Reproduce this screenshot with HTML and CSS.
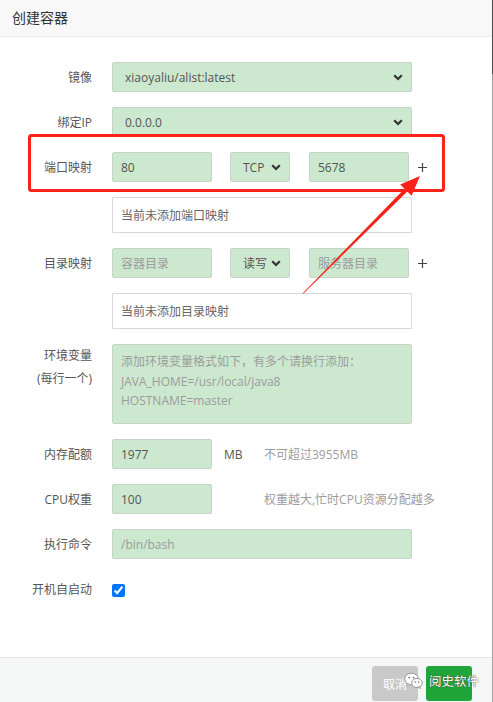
FILE: index.html
```
<!DOCTYPE html>
<html lang="zh-CN">
<head>
<meta charset="utf-8">
<title>创建容器</title>
<link rel="stylesheet" href="styles.css">
</head>
<body>
<div class="dialog">
  <div class="header">创建容器</div>
  <div class="form">
    <div class="row">
      <div class="lbl">镜像</div>
      <div class="field select full"><span>xiaoyaliu/alist:latest</span><svg class="chev" width="10" height="7" viewBox="0 0 10 7"><polyline points="1.2,1.2 5,5 8.8,1.2" fill="none" stroke="#333" stroke-width="2.2"/></svg></div>
    </div>
    <div class="row">
      <div class="lbl">绑定IP</div>
      <div class="field select full"><span>0.0.0.0</span><svg class="chev" width="10" height="7" viewBox="0 0 10 7"><polyline points="1.2,1.2 5,5 8.8,1.2" fill="none" stroke="#333" stroke-width="2.2"/></svg></div>
    </div>
    <div class="row">
      <div class="lbl">端口映射</div>
      <div class="field input short">80</div>
      <div class="field select mini"><span>TCP</span><svg class="chev" width="10" height="7" viewBox="0 0 10 7"><polyline points="1.2,1.2 5,5 8.8,1.2" fill="none" stroke="#333" stroke-width="2.2"/></svg></div>
      <div class="field input short">5678</div>
      <svg class="plus" width="11" height="11" viewBox="0 0 11 11"><path d="M5.5 1 V10 M1 5.5 H10" stroke="#444" stroke-width="1.2" fill="none"/></svg>
    </div>
    <div class="row">
      <div class="lbl"></div>
      <div class="note">当前未添加端口映射</div>
    </div>
    <div class="row">
      <div class="lbl">目录映射</div>
      <div class="field input short ph">容器目录</div>
      <div class="field select mini"><span>读写</span><svg class="chev" width="10" height="7" viewBox="0 0 10 7"><polyline points="1.2,1.2 5,5 8.8,1.2" fill="none" stroke="#333" stroke-width="2.2"/></svg></div>
      <div class="field input short ph">服务器目录</div>
      <svg class="plus" width="11" height="11" viewBox="0 0 11 11"><path d="M5.5 1 V10 M1 5.5 H10" stroke="#444" stroke-width="1.2" fill="none"/></svg>
    </div>
    <div class="row">
      <div class="lbl"></div>
      <div class="note">当前未添加目录映射</div>
    </div>
    <div class="row top">
      <div class="lbl multi">环境变量<br>(每行一个)</div>
      <div class="field area ph">添加环境变量格式如下，有多个请换行添加：<br>JAVA_HOME=/usr/local/java8<br>HOSTNAME=master</div>
    </div>
    <div class="row">
      <div class="lbl">内存配额</div>
      <div class="field input short">1977</div>
      <div class="unit">MB</div>
      <div class="hint">不可超过3955MB</div>
    </div>
    <div class="row">
      <div class="lbl">CPU权重</div>
      <div class="field input short">100</div>
      <div class="unit"></div>
      <div class="hint">权重越大,忙时CPU资源分配越多</div>
    </div>
    <div class="row">
      <div class="lbl">执行命令</div>
      <div class="field input full ph">/bin/bash</div>
    </div>
    <div class="row tall">
      <div class="lbl">开机自启动</div>
      <input class="check" type="checkbox" checked>
    </div>
  </div>
  <div class="footer">
    <button class="btn cancel">取消</button>
    <button class="btn ok"></button>
  </div>
  <div class="watermark">
    <svg class="wx" width="19" height="17" viewBox="0 0 19 17">
      <ellipse cx="7.5" cy="7" rx="6.8" ry="5.8" fill="#fff" stroke="#9a9a9a" stroke-width="1"/>
      <path d="M3.5 11.5 L2.6 14.2 L6 12.5 Z" fill="#fff" stroke="#9a9a9a" stroke-width="0.8"/>
      <circle cx="5.2" cy="5.6" r="0.9" fill="#777"/>
      <circle cx="9.6" cy="5.6" r="0.9" fill="#777"/>
      <ellipse cx="13" cy="11" rx="5.3" ry="4.6" fill="#fff" stroke="#9a9a9a" stroke-width="1"/>
      <path d="M15.8 14.5 L16.8 16.5 L13.8 15.3 Z" fill="#fff" stroke="#9a9a9a" stroke-width="0.8"/>
      <circle cx="11.3" cy="10" r="0.8" fill="#777"/>
      <circle cx="14.7" cy="10" r="0.8" fill="#777"/>
    </svg>
    <span>阅史软件</span>
  </div>
  <svg class="annot" width="493" height="702" viewBox="0 0 493 702">
    <rect x="29.5" y="135.5" width="414" height="55" rx="2" fill="none" stroke="#fa2219" stroke-width="3"/>
    <polygon points="302.5,293.5 303.5,293.5 407.3,191.5 411.6,195.8 420,176 400.2,184.4 404.5,188.7" fill="#fa2219"/>
  </svg>
</div>
</body>
</html>
```
FILE: styles.css
```
html, body {
  margin: 0;
  padding: 0;
  background: #fff;
}
body {
  font-family: "Open Sans", "Noto Sans CJK SC", sans-serif;
  font-size: 12px;
  color: #555;
}
.dialog {
  position: relative;
  width: 493px;
  height: 702px;
  box-sizing: border-box;
  display: flex;
  flex-direction: column;
  overflow: hidden;
  border-right: 1px solid #999;
  border-image: linear-gradient(to bottom, #4a4a4a 0, #4a4a4a 75px, #a3a3a3 75px, #a3a3a3 100%) 1;
  border-top: 0;
  border-left: 0;
  border-bottom: 0;
}
.header {
  height: 36px;
  line-height: 35px;
  padding-left: 12px;
  font-size: 14px;
  color: #333;
  background: #f8f8f8;
  border-bottom: 1px solid #eaeaea;
}
.form {
  flex: 1;
  padding-top: 25px;
}
.row {
  display: flex;
  align-items: center;
  margin-bottom: 15px;
}
.row.top {
  align-items: flex-start;
}
.row.tall {
  min-height: 30px;
}
.lbl {
  width: 112px;
  flex: none;
  padding-right: 20px;
  box-sizing: border-box;
  text-align: right;
  color: #555;
}
.lbl.multi {
  line-height: 23px;
  padding-top: 0;
}
.field {
  box-sizing: border-box;
  height: 30px;
  background: #cce8cf;
  border: 1px solid #c6d3c8;
  border-radius: 2px;
  color: #555;
  display: flex;
  align-items: center;
  white-space: nowrap;
}
.input {
  padding-left: 8px;
}
.select {
  padding-left: 12px;
  padding-right: 8px;
  justify-content: space-between;
}
.full {
  width: 300px;
}
.short {
  width: 100px;
}
.mini {
  width: 60px;
  margin-left: 18px;
  margin-right: 19px;
}
.ph {
  color: #9c9c9c;
}
.plus {
  margin-left: 8px;
  flex: none;
}
.note {
  box-sizing: border-box;
  width: 300px;
  height: 36px;
  padding-left: 8px;
  display: flex;
  align-items: center;
  border: 1px solid #d8d8d8;
  border-radius: 1px;
  color: #666;
  background: #fff;
}
.area {
  width: 300px;
  height: 80px;
  align-items: flex-start;
  padding: 7px 8px 0;
  line-height: 19.5px;
  white-space: normal;
}
.unit {
  width: 40px;
  margin-left: 12px;
  color: #555;
}
.hint {
  color: #9c9c9c;
}
.check {
  margin: 3px 0 0 0;
  width: 13px;
  height: 13px;
}
.footer {
  height: 45px;
  box-sizing: border-box;
  background: #f5f6f6;
  border-top: 1px solid #e6e6e6;
  display: flex;
  justify-content: flex-end;
  align-items: flex-start;
  padding: 8px 20px 0 0;
  gap: 8px;
}
.btn {
  width: 46px;
  height: 35px;
  border: 0;
  border-radius: 3px;
  font-family: "Open Sans", "Noto Sans CJK SC", sans-serif;
  font-size: 12px;
  color: #fff;
  padding: 0;
}
.cancel {
  background: #c9c9c9;
}
.ok {
  background: #20a53a;
}
.watermark {
  position: absolute;
  left: 404px;
  top: 671px;
  display: flex;
  align-items: center;
  gap: 6px;
  color: #fff;
  font-size: 12.5px;
  text-shadow: 0 0 1px #444, 0 0 1px #444;
}
.annot {
  position: absolute;
  left: 0;
  top: 0;
  pointer-events: none;
}
```
